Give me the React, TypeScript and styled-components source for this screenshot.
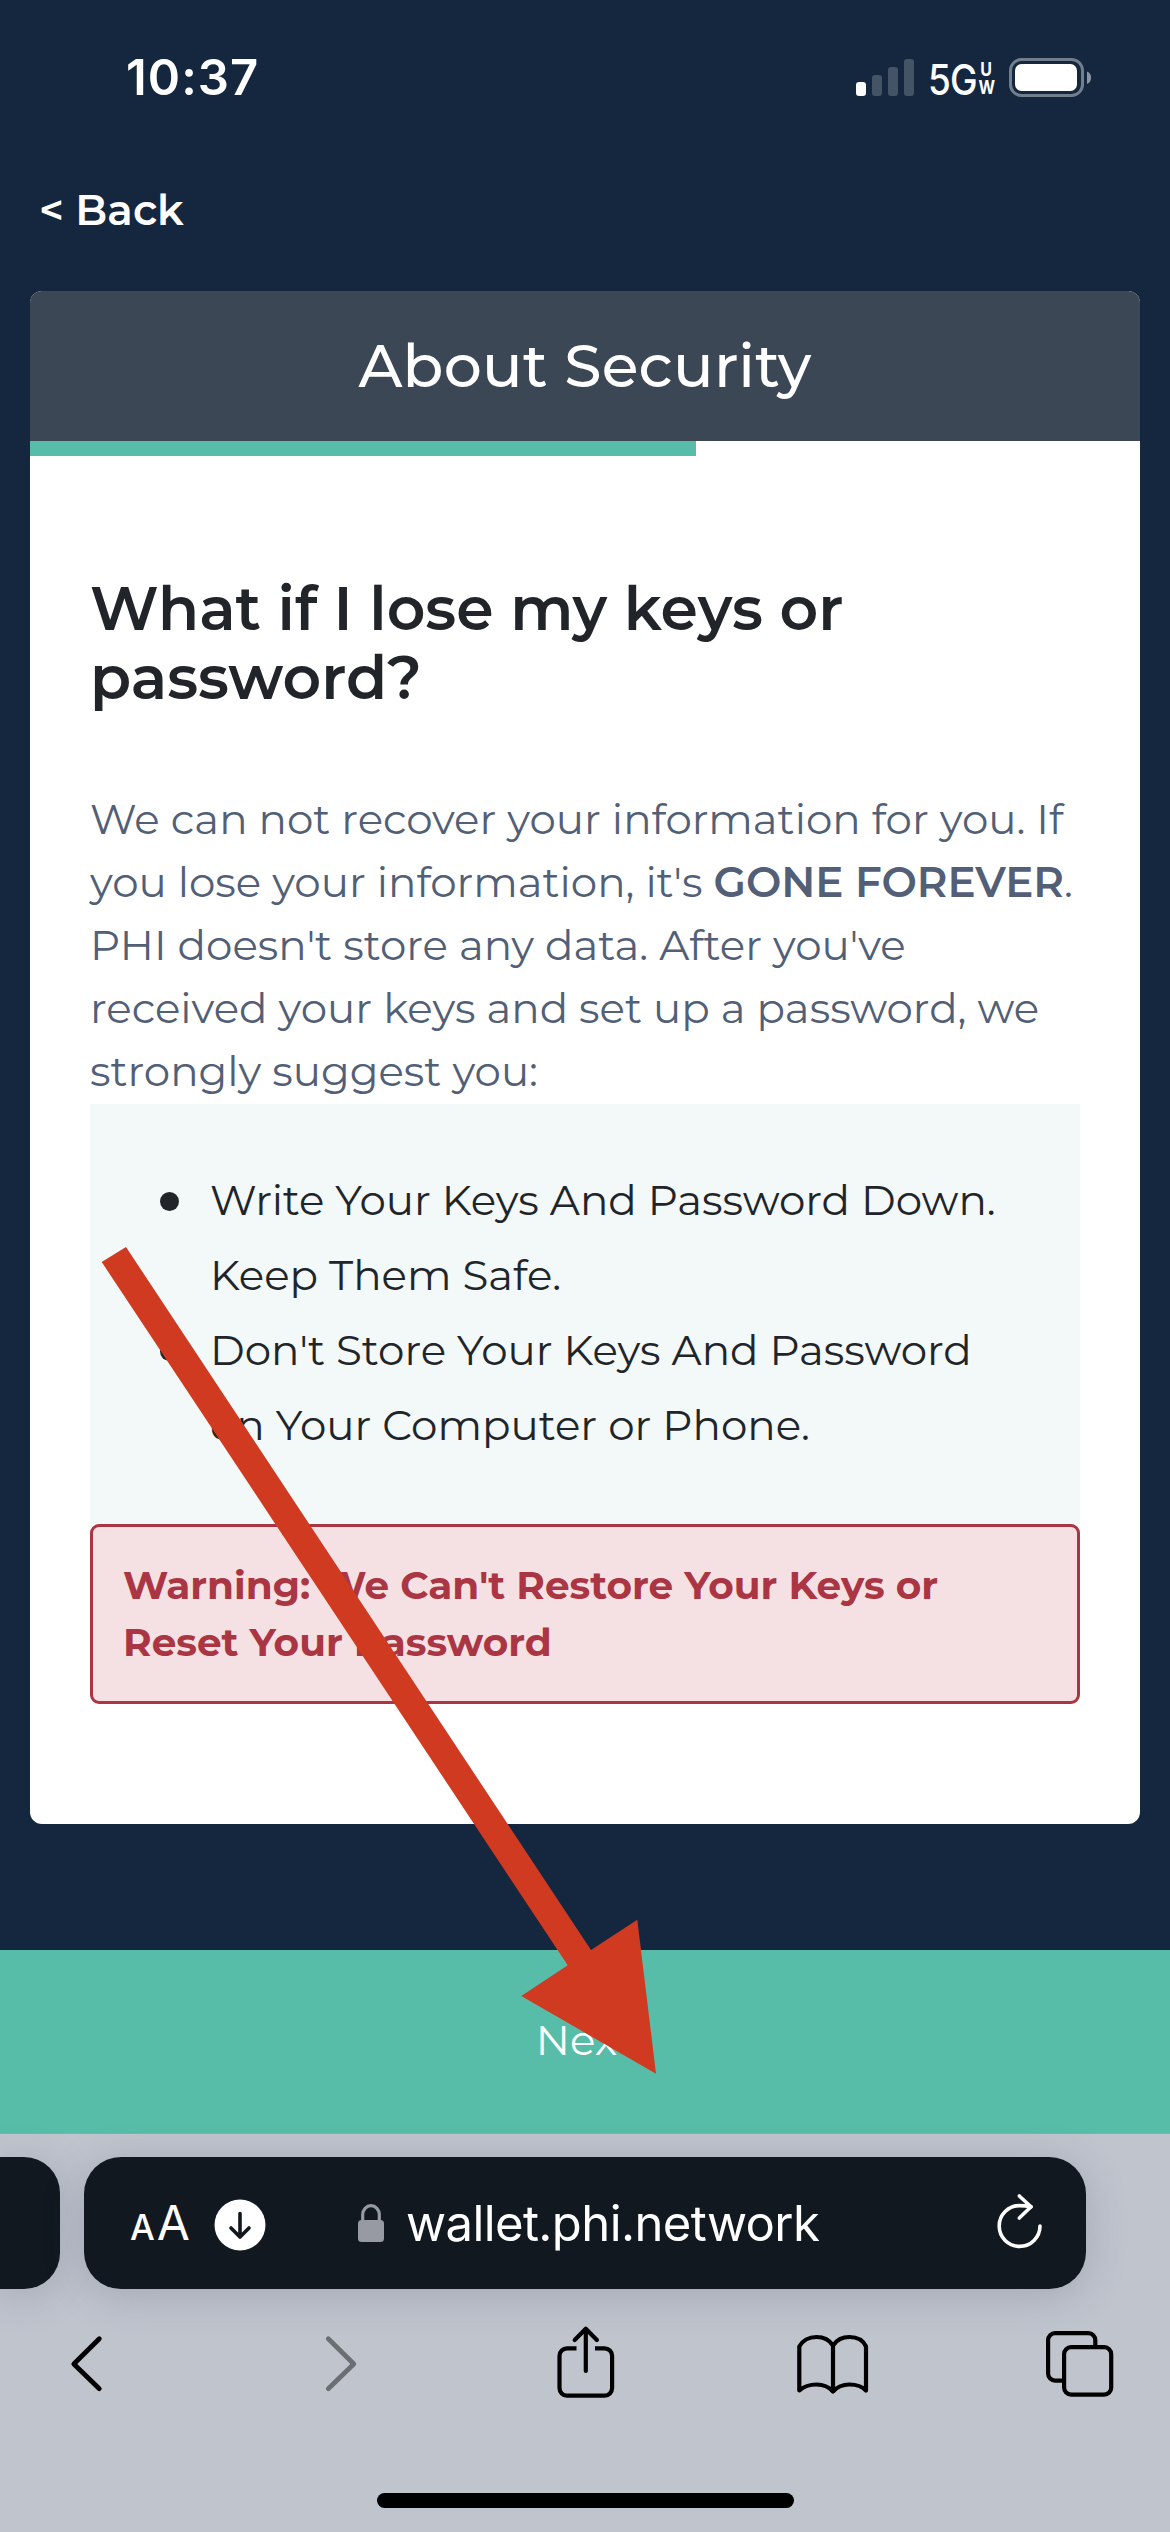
import React from "react";
import styled, { createGlobalStyle } from "styled-components";

const GlobalStyle = createGlobalStyle`
  * { box-sizing: border-box; }
  body { margin: 0; background: #15263f; }
`;

const Screen = styled.div`
  position: relative;
  display: flex;
  flex-direction: column;
  width: 1170px;
  height: 2532px;
  overflow: hidden;
  background: #15263f;
  color: #212529;
  font-family: Montserrat, Inter, "Open Sans", sans-serif;
`;

const StatusBar = styled.header`
  display: flex;
  justify-content: space-between;
  height: 138px;
  padding: 48px 77px 0 126px;
  background: #14273f;
  color: #fff;
  font-family: Inter, sans-serif;
`;

const Clock = styled.time`
  font-size: 49px;
  font-weight: 600;
  line-height: 60px;
  letter-spacing: 1.06px;
`;

const StatusIcons = styled.div`
  display: flex;
  align-items: flex-start;
`;

const SignalBars = styled.svg`
  width: 58px;
  height: 40px;
  margin: 8px 14px 0 0;
`;

const Network = styled.div`
  display: flex;
  width: 67px;
  margin-right: 14px;
`;

const Generation = styled.span`
  width: 49px;
  font-size: 42px;
  font-weight: 550;
  line-height: 60px;
  letter-spacing: -1px;
  transform: scaleX(0.88);
  transform-origin: left;
  margin-top: 2px;
`;

const Band = styled.span`
  display: flex;
  flex-direction: column;
  width: 18px;
  margin-top: 13px;
  font-size: 19px;
  font-weight: 700;
  line-height: 17.5px;
  text-align: center;
  transform: scaleX(0.84);
`;

const Battery = styled.svg`
  width: 84px;
  height: 40px;
  margin-top: 10px;
`;

const BackLink = styled.a`
  margin: 42px 0 51px 39px;
  color: #fff;
  font-size: 42px;
  font-weight: 600;
  line-height: 60px;
`;

const Card = styled.main`
  display: flex;
  flex-direction: column;
  height: 1533px;
  margin: 0 30px;
  overflow: hidden;
  border-radius: 12px;
  background: #fff;
`;

const CardHeader = styled.h1`
  margin: 0;
  background: #3c4756;
  color: #fff;
  font-size: 60px;
  font-weight: 500;
  line-height: 150px;
  letter-spacing: 0.2px;
  text-align: center;
`;

const Progress = styled.div`
  height: 15px;
`;

const ProgressFill = styled.div`
  width: 60%;
  height: 100%;
  background: #58bda8;
`;

const CardBody = styled.div`
  display: flex;
  flex-direction: column;
  padding: 118px 60px 0;
`;

const Question = styled.h2`
  margin: 0 0 76px;
  font-size: 60px;
  font-weight: 600;
  line-height: 69px;
`;

const Paragraph = styled.p`
  margin: 0 0 1px;
  color: #525f77;
  font-size: 42px;
  font-weight: 400;
  line-height: 63px;
`;

const Strong = styled.strong`
  font-weight: 600;
`;

const Tips = styled.ul`
  height: 420px;
  margin: 0;
  padding: 59px 75px 0 70px;
  list-style: none;
  background: #f3f8f9;
  font-size: 42px;
  line-height: 75px;
`;

const Tip = styled.li`
  display: grid;
  grid-template-columns: 50px 1fr;

  &::before {
    content: "";
    width: 19px;
    height: 19px;
    margin-top: 29px;
    border-radius: 50%;
    background: #212529;
  }
`;

const Warning = styled.div`
  height: 180px;
  padding: 30px 30px;
  border: 3px solid #ab3643;
  border-radius: 9px;
  background: #f5e1e3;
  color: #ab3643;
  font-size: 39px;
  font-weight: 700;
  line-height: 57px;
`;

const NextButton = styled.button`
  height: 184px;
  margin: 126px 0 0;
  padding: 0 0 4px;
  border: 0;
  background: #58bda8;
  color: #fff;
  font: inherit;
  font-size: 42px;
  line-height: 60px;
`;

const BrowserChrome = styled.footer`
  display: flex;
  flex-direction: column;
  align-items: center;
  height: 399px;
  margin-top: -1px;
  border-top: 1px solid #8faaa9;
  background: #bfc4cd;
  font-family: Inter, sans-serif;
`;

const AddressRow = styled.div`
  display: flex;
  gap: 24px;
  width: 100%;
  height: 132px;
  margin-top: 23px;
`;

const PreviousTab = styled.div`
  width: 60px;
  border-radius: 0 36px 36px 0;
  background: #12181f;
  box-shadow: 0 6px 40px rgba(70, 75, 100, 0.22);
`;

const AddressBar = styled.div`
  display: flex;
  align-items: center;
  width: 1002px;
  padding: 0 43px 0 46px;
  border-radius: 37px;
  background: #12181f;
  box-shadow: 0 6px 40px rgba(70, 75, 100, 0.22);
  color: #fff;
`;

const TextSize = styled.span`
  display: flex;
  align-items: baseline;
  gap: 2px;
  width: 84px;
  font-size: 48px;
  line-height: 60px;
  margin-top: 3px;
`;

const SmallA = styled.span`
  font-size: 35px;
  font-weight: 500;
`;

const DownloadIcon = styled.svg`
  width: 52px;
  height: 52px;
  margin: 3px 92px 0 0;
`;

const LockIcon = styled.svg`
  width: 26px;
  height: 40px;
  margin-right: 22px;
`;

const Address = styled.span`
  flex: 1;
  font-size: 49px;
  line-height: 60px;
  letter-spacing: -0.6px;
  margin-top: 1px;
`;

const ReloadIcon = styled.svg`
  width: 48px;
  height: 58px;
  overflow: visible;
`;

const Toolbar = styled.nav`
  display: flex;
  justify-content: space-between;
  width: 100%;
  margin-top: 35px;
  padding: 0 50px 0 47px;
`;

const ToolIcon = styled.svg<{ $dim?: boolean }>`
  width: 80px;
  height: 80px;
  fill: none;
  stroke: ${(p) => (p.$dim ? "#6b6f73" : "#000")};
  stroke-width: 4.2;
  stroke-linejoin: round;
`;

const HomeIndicator = styled.div`
  width: 417px;
  height: 15px;
  margin-top: 89px;
  border-radius: 8px;
  background: #000;
`;

const Pointer = styled.svg`
  position: absolute;
  inset: 0;
  width: 1170px;
  height: 2532px;
  pointer-events: none;
`;

export default function App() {
  return (
    <>
      <GlobalStyle />
      <Screen>
        <StatusBar>
          <Clock>10:37</Clock>
          <StatusIcons>
            <SignalBars viewBox="0 0 58 40">
              <rect x="0" y="26" width="10" height="14" rx="3" fill="#fff" />
              <rect x="16" y="19" width="10" height="21" rx="3" fill="#445365" />
              <rect x="32" y="11" width="10" height="29" rx="3" fill="#445365" />
              <rect x="48" y="3" width="10" height="37" rx="3" fill="#445365" />
            </SignalBars>
            <Network>
              <Generation>5G</Generation>
              <Band>
                <span>U</span>
                <span>W</span>
              </Band>
            </Network>
            <Battery viewBox="0 0 84 40">
              <rect x="1.5" y="1.5" width="72" height="36" rx="11" fill="none" stroke="#727e8c" strokeWidth="3" />
              <rect x="6" y="6" width="62" height="27" rx="6.5" fill="#fff" />
              <path d="M78 13.5c5.5 2 5.5 10.5 0 12.5z" fill="#8b95a1" />
            </Battery>
          </StatusIcons>
        </StatusBar>

        <BackLink>&lt; Back</BackLink>

        <Card>
          <CardHeader>About Security</CardHeader>
          <Progress>
            <ProgressFill />
          </Progress>
          <CardBody>
            <Question>What if I lose my keys or password?</Question>
            <Paragraph>
              We can not recover your information for you. If you lose your
              information, it's <Strong>GONE FOREVER</Strong>. PHI doesn't store
              any data. After you've received your keys and set up a password,
              we strongly suggest you:
            </Paragraph>
            <Tips>
              <Tip>
                <span>Write Your Keys And Password Down. Keep Them Safe.</span>
              </Tip>
              <Tip>
                <span>Don't Store Your Keys And Password on Your Computer or Phone.</span>
              </Tip>
            </Tips>
            <Warning>
              Warning: We Can't Restore Your Keys or Reset Your Password
            </Warning>
          </CardBody>
        </Card>

        <NextButton>Next</NextButton>

        <BrowserChrome>
          <AddressRow>
            <PreviousTab />
            <AddressBar>
              <TextSize>
                <SmallA>A</SmallA>
                <span>A</span>
              </TextSize>
              <DownloadIcon viewBox="0 0 52 52">
                <circle cx="26" cy="26" r="25.5" fill="#fff" />
                <path d="M26 14.5V37M17 29l9 9 9-9" fill="none" stroke="#12181f" strokeWidth="3.6" strokeLinecap="round" strokeLinejoin="round" />
              </DownloadIcon>
              <LockIcon viewBox="0 0 26 40">
                <path d="M4.7 18V11.5a8.3 8.8 0 0 1 16.6 0V18" fill="none" stroke="#9799a3" strokeWidth="3.2" />
                <rect x="0" y="17" width="26" height="22" rx="3.5" fill="#9799a3" />
              </LockIcon>
              <Address>wallet.phi.network</Address>
              <ReloadIcon viewBox="0 0 48 58" fill="none" stroke="#fff" strokeWidth="3.6" strokeLinecap="round" strokeLinejoin="round">
                <path d="M45 32a20.4 20.4 0 1 1-20.4-20.4q6 0 11.4 1.2" />
                <path d="M24.3 2L36 12.8 24.3 24" />
              </ReloadIcon>
            </AddressBar>
          </AddressRow>
          <Toolbar>
            <ToolIcon viewBox="0 0 80 80" strokeLinecap="round">
              <path d="M52.3 14.8L26.8 40l25.5 24.7" strokeWidth="4.8" />
            </ToolIcon>
            <ToolIcon viewBox="0 0 80 80" strokeLinecap="round" $dim>
              <path d="M33.3 14.8L58.8 40 33.3 64.7" strokeWidth="4.8" />
            </ToolIcon>
            <ToolIcon viewBox="0 0 80 80">
              <path d="M32.5 24.4H23a7.5 7.5 0 0 0-7.5 7.5v32.2a7.5 7.5 0 0 0 7.5 7.5h37.6a7.5 7.5 0 0 0 7.5-7.5V31.900a7.5 7.5 0 0 0-7.5-7.5H51" />
              <path d="M41.8 5v42M30.7 15.9L41.8 4.7l11.1 11.2" strokeLinecap="round" />
            </ToolIcon>
            <ToolIcon viewBox="0 0 80 80">
              <path d="M41 21.5C37.5 16 31.5 13 24.5 13S11 16 7.3 22.5V66.5C11.5 62.8 18 60.5 24.5 60.5S37 63 41 67.5C45 63 51 60.5 57.5 60.5S70.5 62.8 74 66.5V22.5C71 16 64.5 13 57.5 13S44.5 16 41 21.5V67" />
            </ToolIcon>
            <ToolIcon viewBox="0 0 80 80">
              <path d="M55.3 22v-5.9a7 7 0 0 0-7-7H15.1a7 7 0 0 0-7 7v33.5a7 7 0 0 0 7 7H23" />
              <rect x="24.1" y="23.1" width="47.1" height="47.5" rx="7" />
            </ToolIcon>
          </Toolbar>
          <HomeIndicator />
        </BrowserChrome>

        <Pointer viewBox="0 0 1170 2532">
          <polygon points="126,1247 591,1950 637.3,1919.7 656,2073.7 521.3,1996 567.7,1965.3 101.7,1262" fill="#cf3a20" />
        </Pointer>
      </Screen>
    </>
  );
}
